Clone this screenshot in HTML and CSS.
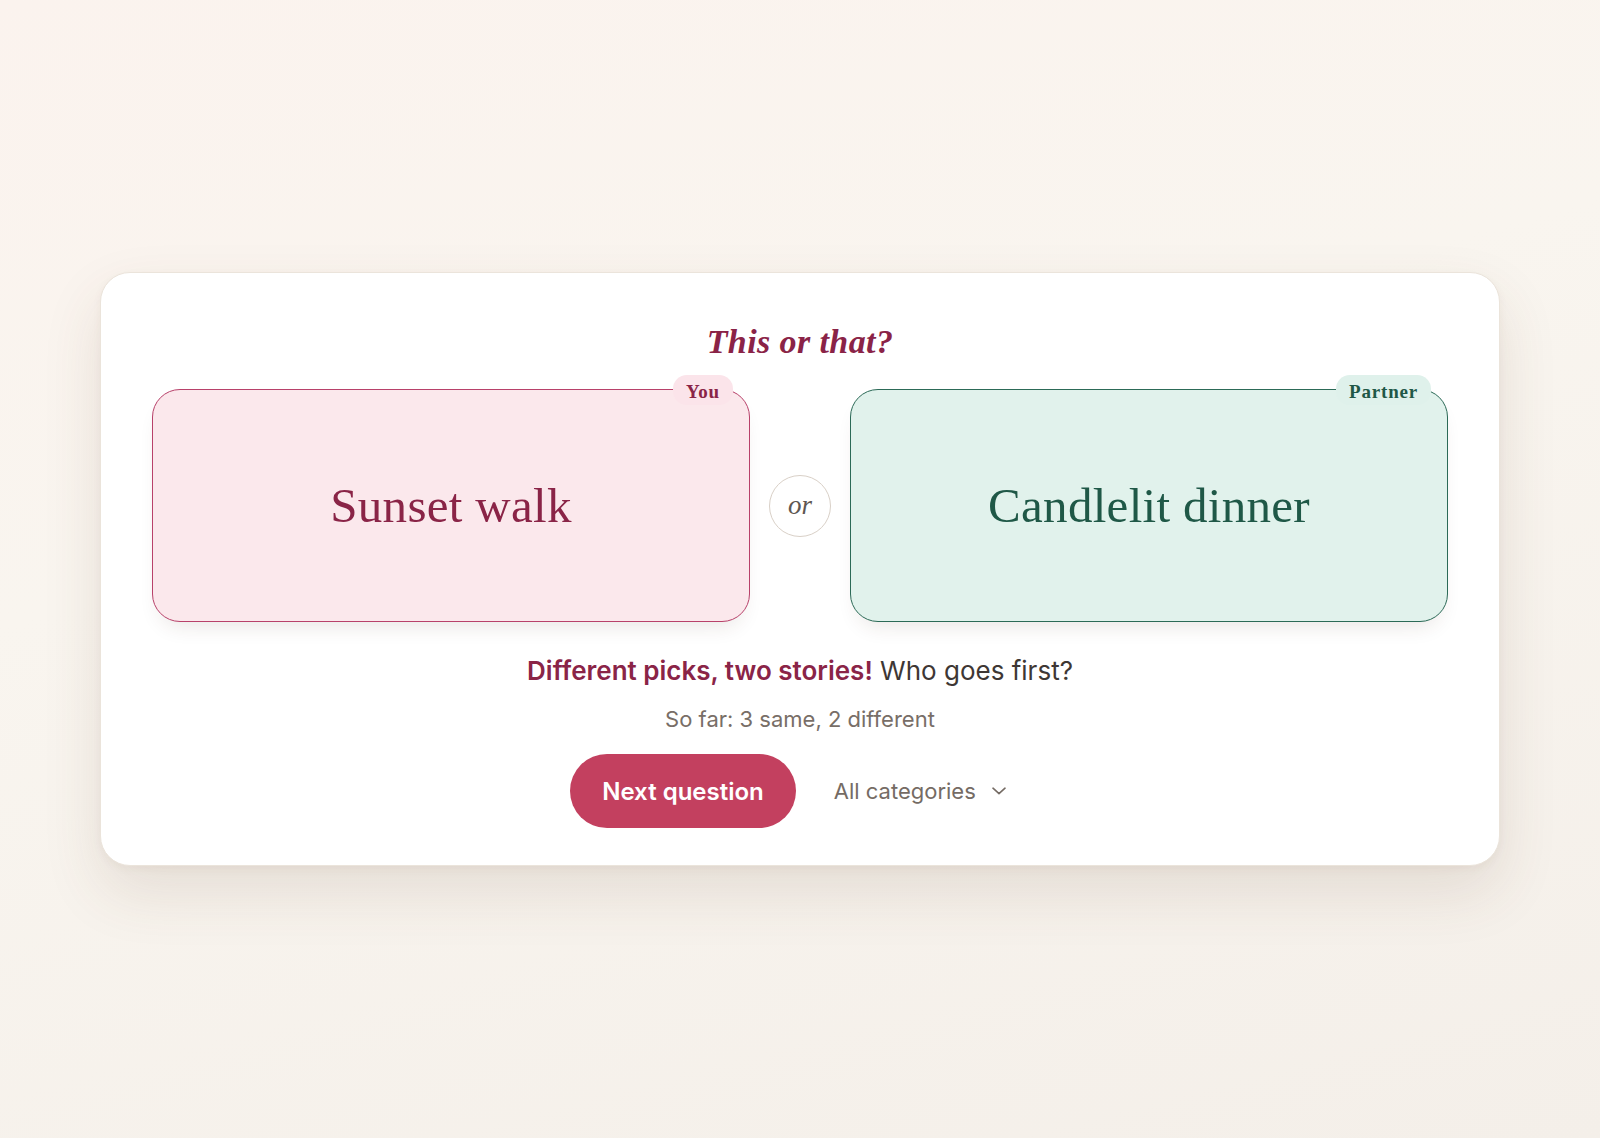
FILE: index.html
```html
<!DOCTYPE html>
<html lang="en">
<head>
<meta charset="utf-8">
<title>This or that?</title>
<link rel="stylesheet" href="styles.css">
</head>
<body>
<main class="page">
  <section class="card">
    <h1 class="title">This or that?</h1>
    <div class="choices">
      <div class="choice choice-you">
        <span class="badge badge-you">You</span>
        <span class="choice-text">Sunset walk</span>
      </div>
      <div class="or">or</div>
      <div class="choice choice-partner">
        <span class="badge badge-partner">Partner</span>
        <span class="choice-text">Candlelit dinner</span>
      </div>
    </div>
    <p class="result"><strong>Different picks, two stories!</strong> Who goes first?</p>
    <p class="tally">So far: 3 same, 2 different</p>
    <div class="actions">
      <button class="next-btn" type="button">Next question</button>
      <button class="category" type="button">
        <span>All categories</span>
        <svg class="chev" width="14" height="8" viewBox="0 0 14 8" aria-hidden="true"><path d="M1 1.2 L7 6.6 L13 1.2" fill="none" stroke="#756b64" stroke-width="1.6" stroke-linecap="round" stroke-linejoin="round"/></svg>
      </button>
    </div>
  </section>
</main>
</body>
</html>
```

FILE: styles.css
```css
html, body {
  margin: 0;
  padding: 0;
}
body {
  background: linear-gradient(165deg, #fbf3ee 0%, #f9f5ef 40%, #f4efe9 100%);
  font-family: Inter, "Noto Sans", "Liberation Sans", sans-serif;
  min-height: 100vh;
}
.page {
  min-height: 1138px;
  display: flex;
  align-items: center;
  justify-content: center;
}
.card {
  width: 1400px;
  box-sizing: border-box;
  padding: 50px 51px 37px;
  background: #ffffff;
  border: 1px solid #ebe4db;
  border-radius: 30px;
  box-shadow: 0 26px 60px rgba(96, 66, 44, 0.12), 0 3px 8px rgba(96, 66, 44, 0.05);
  text-align: center;
}
.title {
  margin: 0 0 28px;
  font-family: "Liberation Serif", "Times New Roman", serif;
  font-style: italic;
  font-weight: 700;
  font-size: 34px;
  line-height: 38px;
  letter-spacing: 0.4px;
  color: #8a2347;
}
.choices {
  display: grid;
  grid-template-columns: 1fr 62px 1fr;
  gap: 19px;
  align-items: center;
}
.choice {
  position: relative;
  height: 233px;
  box-sizing: border-box;
  border-radius: 28px;
  display: flex;
  align-items: center;
  justify-content: center;
  box-shadow: 0 12px 22px -10px rgba(70, 40, 30, 0.14);
}
.choice-you {
  background: #fbe8ec;
  border: 1px solid #b8416a;
  color: #8a2447;
}
.choice-partner {
  background: #e1f2ec;
  border: 1px solid #2c6a57;
  color: #1f5847;
}
.choice-text {
  font-family: "Liberation Serif", "Times New Roman", serif;
  font-size: 49px;
  line-height: 1;
  letter-spacing: 0.3px;
}
.badge {
  position: absolute;
  top: -15px;
  right: 16px;
  height: 30px;
  padding: 0 13px;
  border-radius: 14px;
  font-family: "Liberation Serif", "Times New Roman", serif;
  font-weight: 700;
  font-size: 19px;
  line-height: 34px;
  letter-spacing: 0.8px;
}
.badge-you {
  background: #fbe4ea;
  color: #8a2447;
}
.badge-partner {
  background: #dff1eb;
  color: #1f5847;
}
.or {
  width: 62px;
  height: 62px;
  box-sizing: border-box;
  border-radius: 50%;
  border: 1px solid #d9d0c7;
  background: #ffffff;
  display: flex;
  align-items: center;
  justify-content: center;
  font-family: "Liberation Serif", "Times New Roman", serif;
  font-style: italic;
  font-size: 27px;
  color: #5f5752;
}
.result {
  margin: 33px 0 0;
  font-size: 26px;
  line-height: 32px;
  color: #3e3734;
}
.result strong {
  color: #8a2447;
  font-weight: 600;
}
.tally {
  margin: 18px 0 0;
  font-size: 22px;
  line-height: 28px;
  color: #786e67;
}
.actions {
  margin-top: 21px;
  display: flex;
  justify-content: center;
  align-items: center;
  gap: 14px;
}
.next-btn {
  height: 74px;
  padding: 0 32px;
  border: none;
  border-radius: 37px;
  background: #c3405f;
  color: #ffffff;
  font-family: Inter, "Noto Sans", sans-serif;
  font-weight: 600;
  font-size: 24px;
  cursor: pointer;
}
.category {
  height: 74px;
  padding: 0 24px;
  border: none;
  background: transparent;
  display: flex;
  align-items: center;
  gap: 16px;
  font-family: Inter, "Noto Sans", sans-serif;
  font-size: 22px;
  color: #756b64;
  cursor: pointer;
}
.chev {
  display: block;
}
```
